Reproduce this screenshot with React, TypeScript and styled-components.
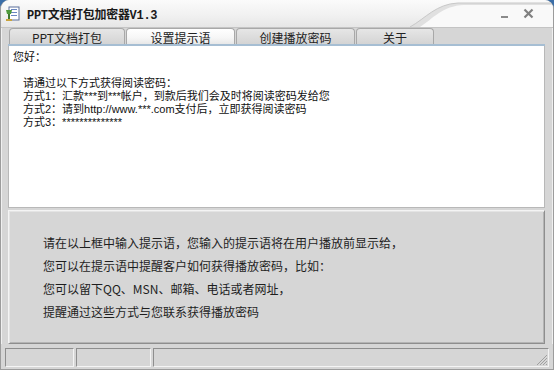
import styled, { createGlobalStyle } from 'styled-components';

const GlobalStyle = createGlobalStyle`
  html, body {
    margin: 0;
    padding: 0;
    background: #3b6ea8;
  }
  #root {
    width: 554px;
    height: 370px;
  }
`;

const Window = styled.div`
  width: 554px;
  height: 370px;
  box-sizing: border-box;
  display: flex;
  flex-direction: column;
  background: #d6d6d6;
  border-radius: 9px 9px 0 0;
  overflow: hidden;
  border-left: 1px solid #9c9c9c;
  border-right: 1px solid #9c9c9c;
  border-bottom: 1px solid #9c9c9c;
  font-family: 'Noto Sans CJK SC', sans-serif;
`;

const TitleBar = styled.div`
  position: relative;
  height: 28px;
  flex-shrink: 0;
  display: flex;
  align-items: center;
  padding-left: 4px;
  background: linear-gradient(#fbfbfb, #f0f0f0 60%, #e6e6e6);
  border-bottom: 1px solid #c4c4c4;
  box-sizing: border-box;
`;

const Swoosh = styled.svg`
  position: absolute;
  left: 395px;
  top: 0;
`;

const TitleText = styled.span`
  position: relative;
  margin-left: 6px;
  font-family: 'Liberation Mono', 'Noto Sans CJK SC', monospace;
  font-weight: bold;
  font-size: 12px;
  color: #1a1a1a;
  letter-spacing: -0.3px;
`;

const Controls = styled.div`
  position: relative;
  margin-left: auto;
  margin-right: 19px;
  display: flex;
  align-items: center;
  gap: 13px;
`;

const Frame = styled.div`
  flex: 1;
  display: flex;
  flex-direction: column;
  padding: 0 7px 0 6px;
  border-left: 1px solid #f0f0f0;
  border-right: 1px solid #f0f0f0;
`;

const TabStrip = styled.div`
  height: 18px;
  display: flex;
  align-items: flex-end;
  padding-left: 1px;
  border-bottom: 2px solid #a6bed3;
  box-sizing: border-box;
`;

const Tab = styled.div<{ $w: number; $active?: boolean }>`
  width: ${(p) => p.$w}px;
  height: 16px;
  padding-top: 1px;
  margin-right: 1px;
  box-sizing: border-box;
  display: flex;
  align-items: center;
  justify-content: center;
  font-size: 12px;
  color: #222;
  border: 1px solid #a8a8a8;
  border-bottom: none;
  border-radius: 4px 4px 0 0;
  background: ${(p) =>
    p.$active
      ? 'linear-gradient(#ffffff, #f6f6f6 60%, #e8e8e8)'
      : 'linear-gradient(#e6e6e6, #d4d4d4)'};
`;

const Editor = styled.div`
  height: 162px;
  box-sizing: border-box;
  background: #fff;
  border: 1px solid #b8b8b8;
  border-top: none;
  padding: 5px 0 0 4px;
  font-size: 11px;
  line-height: 13px;
  color: #111;
  font-family: 'Liberation Sans', 'Noto Sans CJK SC', sans-serif;
`;

const Line = styled.div<{ $indent?: boolean; $gap?: number }>`
  padding-left: ${(p) => (p.$indent ? 10 : 0)}px;
  margin-top: ${(p) => p.$gap ?? 0}px;
  white-space: pre;
`;

const InfoPanel = styled.div`
  margin-top: 2px;
  height: 134px;
  box-sizing: border-box;
  border: 1px solid;
  border-color: #f4f4f4 #8e8e8e #8e8e8e #f4f4f4;
  box-shadow: inset 1px 1px 0 #e4e4e4, inset -1px -1px 0 #b4b4b4;
  padding: 26px 0 0 34px;
  display: flex;
  flex-direction: column;
  gap: 11px;
`;

const InfoLine = styled.div`
  font-size: 12px;
  line-height: 12px;
  color: #1e1e1e;
  white-space: pre;
`;

const StatusBar = styled.div`
  margin: 4px 0 2px;
  height: 19px;
  display: flex;
  gap: 2px;
  padding: 0 4px;
`;

const StatusCell = styled.div<{ $w?: number }>`
  position: relative;
  ${(p) => (p.$w ? `width: ${p.$w}px;` : 'flex: 1;')}
  box-sizing: border-box;
  border: 1px solid;
  border-color: #8e8e8e #f4f4f4 #f4f4f4 #8e8e8e;
`;

const Grip = styled.svg`
  position: absolute;
  right: 0;
  bottom: 0;
`;

export default function App() {
  return (
    <>
      <GlobalStyle />
      <Window>
        <TitleBar>
          <Swoosh width="160" height="27" viewBox="0 0 160 27">
            <path d="M14 27 C 30 18, 40 4, 62 3 L 160 3 L 160 27 Z" fill="#e0e0e0" />
            <path d="M24 27 C 38 18, 46 6, 68 5 L 160 5 L 160 27 Z" fill="#f9f9f9" />
            <path d="M14 27 C 30 18, 40 4, 62 3 L 160 3" stroke="#c8c8c8" fill="none" />
          </Swoosh>
          <svg width="16" height="16" viewBox="0 0 16 16" style={{ position: 'relative' }}>
            <rect x="4" y="1" width="10" height="13" fill="#fff" stroke="#5b6f9a" />
            <rect x="6" y="3" width="6" height="1" fill="#6b87c0" />
            <rect x="6" y="6" width="6" height="1" fill="#6b87c0" />
            <rect x="6" y="9" width="6" height="1" fill="#6b87c0" />
            <path d="M1 4 L7 4 L6 8 L2 8 Z" fill="#4f9a3c" />
            <rect x="3" y="8" width="2" height="6" fill="#3f7a30" />
            <rect x="1" y="13" width="6" height="2" fill="#c9a33c" />
          </svg>
          <TitleText>PPT文档打包加密器V1.3</TitleText>
          <Controls>
            <svg width="10" height="10" viewBox="0 0 10 10">
              <rect x="1" y="7" width="7" height="2" fill="#8a8a8a" />
            </svg>
            <svg width="11" height="11" viewBox="0 0 11 11">
              <path d="M1.5 1.5 L9.5 9.5 M9.5 1.5 L1.5 9.5" stroke="#808080" strokeWidth="2.2" />
            </svg>
          </Controls>
        </TitleBar>
        <Frame>
          <TabStrip>
            <Tab $w={116}>PPT文档打包</Tab>
            <Tab $w={109} $active>设置提示语</Tab>
            <Tab $w={119}>创建播放密码</Tab>
            <Tab $w={78}>关于</Tab>
          </TabStrip>
          <Editor>
            <Line>您好：</Line>
            <Line $indent $gap={13}>请通过以下方式获得阅读密码：</Line>
            <Line $indent>方式1：汇款***到***帐户，到款后我们会及时将阅读密码发给您</Line>
            <Line $indent>方式2：请到http://www.***.com支付后，立即获得阅读密码</Line>
            <Line $indent>方式3：**************</Line>
          </Editor>
          <InfoPanel>
            <InfoLine>请在以上框中输入提示语，您输入的提示语将在用户播放前显示给，</InfoLine>
            <InfoLine>您可以在提示语中提醒客户如何获得播放密码，比如：</InfoLine>
            <InfoLine>您可以留下QQ、MSN、邮箱、电话或者网址，</InfoLine>
            <InfoLine>提醒通过这些方式与您联系获得播放密码</InfoLine>
          </InfoPanel>
        </Frame>
        <StatusBar>
          <StatusCell $w={69} />
          <StatusCell $w={75} />
          <StatusCell>
            <Grip width="12" height="12" viewBox="0 0 12 12">
              <path d="M11 1 L1 11 M11 4 L4 11 M11 7 L7 11 M11 10 L10 11" stroke="#a0a0a0" />
            </Grip>
          </StatusCell>
        </StatusBar>
      </Window>
    </>
  );
}
